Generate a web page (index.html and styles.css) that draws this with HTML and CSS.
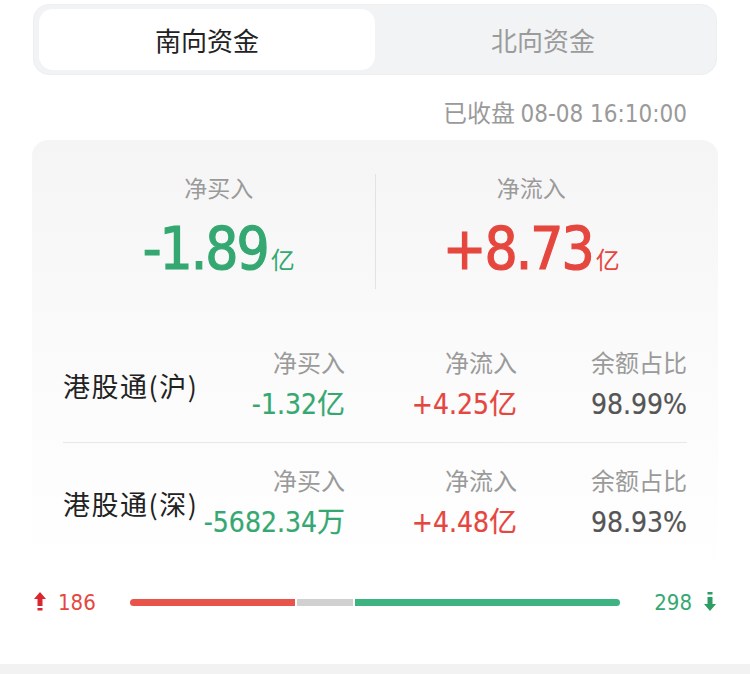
FILE: index.html
```html
<!DOCTYPE html>
<html lang="zh-CN">
<head>
    <meta charset="UTF-8">
    <meta name="viewport" content="width=device-width, initial-scale=1.0">
    <title>南向资金</title>
    <link rel="stylesheet" href="styles.css">
</head>
<body>
    <div class="tabs">
        <div class="tab active">南向资金</div>
        <div class="tab">北向资金</div>
    </div>

    <div class="update-time">已收盘 <span class="num">08-08 16:10:00</span></div>

    <div class="card">
        <div class="summary">
            <div class="summary-item">
                <div class="label">净买入</div>
                <div class="big-value green"><span class="num">-1.89</span><span class="unit">亿</span></div>
            </div>
            <div class="summary-item">
                <div class="label">净流入</div>
                <div class="big-value red"><span class="num">+8.73</span><span class="unit">亿</span></div>
            </div>
        </div>

        <div class="channel">
            <div class="channel-name">港股通(沪)</div>
            <div class="cell">
                <div class="label">净买入</div>
                <div class="value green"><span class="num">-1.32</span>亿</div>
            </div>
            <div class="cell">
                <div class="label">净流入</div>
                <div class="value red"><span class="num">+4.25</span>亿</div>
            </div>
            <div class="cell">
                <div class="label">余额占比</div>
                <div class="value dark"><span class="num">98.99%</span></div>
            </div>
        </div>

        <div class="channel">
            <div class="channel-name">港股通(深)</div>
            <div class="cell">
                <div class="label">净买入</div>
                <div class="value green"><span class="num">-5682.34</span>万</div>
            </div>
            <div class="cell">
                <div class="label">净流入</div>
                <div class="value red"><span class="num">+4.48</span>亿</div>
            </div>
            <div class="cell">
                <div class="label">余额占比</div>
                <div class="value dark"><span class="num">98.93%</span></div>
            </div>
        </div>
    </div>

    <div class="breadth">
        <div class="count red">
            <svg width="12" height="20" viewBox="0 0 12 20">
                <polygon points="6,0 12,7 8.5,7 8.5,14 3.5,14 3.5,7 0,7" fill="#d9262f" />
                <rect x="3.5" y="16" width="5" height="2.5" fill="#d9262f" />
            </svg>
            <span class="num">186</span>
        </div>
        <div class="bar">
            <span class="seg up" style="flex: 186"></span>
            <span class="seg flat" style="flex: 62"></span>
            <span class="seg down" style="flex: 298"></span>
        </div>
        <div class="count green">
            <span class="num">298</span>
            <svg width="12" height="20" viewBox="0 0 12 20">
                <rect x="3.5" y="0" width="5" height="2.5" fill="#2c9d63" />
                <polygon points="3.5,5 8.5,5 8.5,12 12,12 6,19 0,12 3.5,12" fill="#2c9d63" />
            </svg>
        </div>
    </div>

    <div class="bottom-strip"></div>
</body>
</html>
```

FILE: styles.css
```css
body {
    margin: 0;
    background-color: #fff;
    font-family: "Noto Sans CJK SC", "Noto Sans", sans-serif;
    color: #222;
}

.num {
    font-family: "DejaVu Sans Condensed", "Liberation Sans Narrow", "Roboto", sans-serif;
}

.green {
    color: #35a872;
}

.red {
    color: #e5473f;
}

.dark {
    color: #555;
}

/* tabs */
.tabs {
    display: flex;
    margin: 4px 33px 0;
    height: 71px;
    padding: 4px 5px;
    box-sizing: border-box;
    background-color: #f2f3f5;
    border: 1px solid #eceef0;
    border-radius: 16px;
}

.tab {
    flex: 1;
    display: flex;
    align-items: center;
    justify-content: center;
    font-size: 26px;
    color: #9b9b9b;
    border-radius: 14px;
}

.tab.active {
    background-color: #fff;
    color: #222;
}

.update-time {
    text-align: right;
    padding-right: 63px;
    margin-top: 22px;
    line-height: 30px;
    font-size: 24px;
    color: #9a9a9a;
}

/* card */
.card {
    margin: 11px 32px 0;
    padding: 34px 31px 20px;
    border-radius: 16px;
    background: linear-gradient(#f5f5f5, #fbfbfb 55%, #fff);
}

.summary {
    display: flex;
    margin-bottom: 36px;
}

.summary-item {
    flex: 1;
    text-align: center;
}

.summary-item + .summary-item {
    border-left: 1px solid #e3e3e3;
}

.summary .label {
    font-size: 23px;
    line-height: 26px;
    color: #9a9a9a;
}

.big-value {
    margin-top: 14px;
    line-height: 60px;
    font-size: 58px;
    letter-spacing: -2px;
    -webkit-text-stroke: 1.2px currentColor;
}

.big-value .unit {
    font-size: 24px;
    letter-spacing: 0;
    margin-left: 3px;
    -webkit-text-stroke: 0;
}

.channel {
    display: grid;
    grid-template-columns: max-content 1fr 172px 170px;
    align-items: center;
    padding: 22px 0 19px;
}

.channel + .channel {
    border-top: 1px solid #e8e8e8;
}

.channel-name {
    font-size: 27px;
    letter-spacing: 1.5px;
    white-space: nowrap;
    color: #222;
}

.cell {
    text-align: right;
}

.cell .label {
    font-size: 24px;
    line-height: 30px;
    color: #9a9a9a;
}

.cell .value {
    margin-top: 7px;
    font-size: 28px;
    line-height: 36px;
    white-space: nowrap;
    -webkit-text-stroke: 0.2px currentColor;
}

/* up / down breadth bar */
.breadth {
    display: flex;
    align-items: center;
    margin-top: 10px;
    padding: 0 34px;
    height: 24px;
}

.count {
    display: flex;
    align-items: center;
    gap: 12px;
    font-size: 22px;
}

.bar {
    flex: 1;
    display: flex;
    gap: 2px;
    height: 7px;
    margin: 0 34px;
    border-radius: 4px;
    overflow: hidden;
}

.seg.up {
    background-color: #e8544a;
}

.seg.flat {
    background-color: #d0d0d0;
}

.seg.down {
    background-color: #3eb382;
}

.bottom-strip {
    margin-top: 50px;
    height: 11px;
    background-color: #f2f2f2;
}
```
